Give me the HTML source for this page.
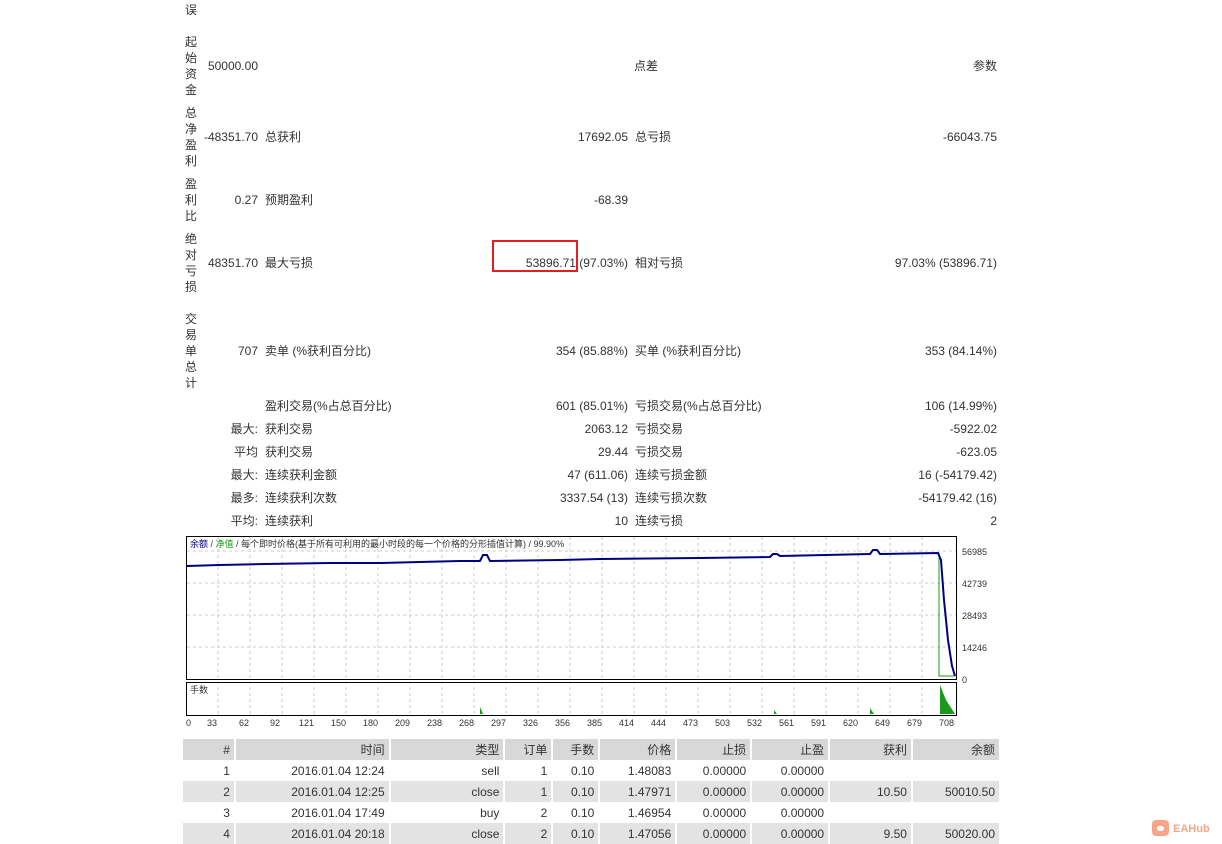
<!DOCTYPE html>
<html><head><meta charset="utf-8"><style>
body{margin:0;width:1222px;height:844px;background:#fff;position:relative;overflow:hidden;font-family:"Liberation Sans","Noto Sans CJK SC",sans-serif;font-size:12px;color:#333}
.a{position:absolute;white-space:nowrap;line-height:16px;margin-top:1px}
.r{text-align:right}
.v{position:absolute;left:185px;width:14px;line-height:16px;font-size:12px;margin-top:1px}
table{position:absolute;left:183px;top:739px;border-collapse:collapse;width:818px;font-size:12px;color:#333}
td{height:21px;padding:0 4px;text-align:right;border-right:2px solid #fff}
tr.h td{background:#d8d8d8;height:21px}
tr.g td{background:#e3e3e3}
</style></head><body>
<div class="v" style="top:1px">误</div>
<div class="v" style="top:33px">起<br>始<br>资<br>金</div>
<div class="v" style="top:104px">总<br>净<br>盈<br>利</div>
<div class="v" style="top:175px">盈<br>利<br>比</div>
<div class="v" style="top:230px">绝<br>对<br>亏<br>损</div>
<div class="v" style="top:310px">交<br>易<br>单<br>总<br>计</div>

<div class="a r" style="right:964px;top:57px">50000.00</div>
<div class="a r" style="right:564px;top:57px">点差</div>
<div class="a r" style="right:225px;top:57px">参数</div>

<div class="a r" style="right:964px;top:128px">-48351.70</div>
<div class="a" style="left:265px;top:128px">总获利</div>
<div class="a r" style="right:594px;top:128px">17692.05</div>
<div class="a" style="left:635px;top:128px">总亏损</div>
<div class="a r" style="right:225px;top:128px">-66043.75</div>

<div class="a r" style="right:964px;top:191px">0.27</div>
<div class="a" style="left:265px;top:191px">预期盈利</div>
<div class="a r" style="right:594px;top:191px">-68.39</div>

<div class="a r" style="right:964px;top:254px">48351.70</div>
<div class="a" style="left:265px;top:254px">最大亏损</div>
<div class="a r" style="right:594px;top:254px">53896.71 (97.03%)</div>
<div style="position:absolute;left:492px;top:240px;width:82px;height:28px;border:2px solid #e02020"></div>
<div class="a" style="left:635px;top:254px">相对亏损</div>
<div class="a r" style="right:225px;top:254px">97.03% (53896.71)</div>

<div class="a r" style="right:964px;top:342px">707</div>
<div class="a" style="left:265px;top:342px">卖单 (%获利百分比)</div>
<div class="a r" style="right:594px;top:342px">354 (85.88%)</div>
<div class="a" style="left:635px;top:342px">买单 (%获利百分比)</div>
<div class="a r" style="right:225px;top:342px">353 (84.14%)</div>

<div class="a" style="left:265px;top:397px">盈利交易(%占总百分比)</div>
<div class="a r" style="right:594px;top:397px">601 (85.01%)</div>
<div class="a" style="left:635px;top:397px">亏损交易(%占总百分比)</div>
<div class="a r" style="right:225px;top:397px">106 (14.99%)</div>

<div class="a r" style="right:964px;top:420px">最大:</div>
<div class="a" style="left:265px;top:420px">获利交易</div>
<div class="a r" style="right:594px;top:420px">2063.12</div>
<div class="a" style="left:635px;top:420px">亏损交易</div>
<div class="a r" style="right:225px;top:420px">-5922.02</div>

<div class="a r" style="right:964px;top:443px">平均</div>
<div class="a" style="left:265px;top:443px">获利交易</div>
<div class="a r" style="right:594px;top:443px">29.44</div>
<div class="a" style="left:635px;top:443px">亏损交易</div>
<div class="a r" style="right:225px;top:443px">-623.05</div>

<div class="a r" style="right:964px;top:466px">最大:</div>
<div class="a" style="left:265px;top:466px">连续获利金额</div>
<div class="a r" style="right:594px;top:466px">47 (611.06)</div>
<div class="a" style="left:635px;top:466px">连续亏损金额</div>
<div class="a r" style="right:225px;top:466px">16 (-54179.42)</div>

<div class="a r" style="right:964px;top:489px">最多:</div>
<div class="a" style="left:265px;top:489px">连续获利次数</div>
<div class="a r" style="right:594px;top:489px">3337.54 (13)</div>
<div class="a" style="left:635px;top:489px">连续亏损次数</div>
<div class="a r" style="right:225px;top:489px">-54179.42 (16)</div>

<div class="a r" style="right:964px;top:512px">平均:</div>
<div class="a" style="left:265px;top:512px">连续获利</div>
<div class="a r" style="right:594px;top:512px">10</div>
<div class="a" style="left:635px;top:512px">连续亏损</div>
<div class="a r" style="right:225px;top:512px">2</div>

<svg style="position:absolute;left:0;top:0" width="1222" height="844">
<g stroke="#ccc" stroke-dasharray="3,3" stroke-width="1">
<line x1="218" y1="537" x2="218" y2="715"/><line x1="250" y1="537" x2="250" y2="715"/><line x1="282" y1="537" x2="282" y2="715"/><line x1="314" y1="537" x2="314" y2="715"/><line x1="346" y1="537" x2="346" y2="715"/><line x1="378" y1="537" x2="378" y2="715"/><line x1="410" y1="537" x2="410" y2="715"/><line x1="442" y1="537" x2="442" y2="715"/><line x1="474" y1="537" x2="474" y2="715"/><line x1="506" y1="537" x2="506" y2="715"/><line x1="538" y1="537" x2="538" y2="715"/><line x1="570" y1="537" x2="570" y2="715"/><line x1="602" y1="537" x2="602" y2="715"/><line x1="634" y1="537" x2="634" y2="715"/><line x1="666" y1="537" x2="666" y2="715"/><line x1="698" y1="537" x2="698" y2="715"/><line x1="730" y1="537" x2="730" y2="715"/><line x1="762" y1="537" x2="762" y2="715"/><line x1="794" y1="537" x2="794" y2="715"/><line x1="826" y1="537" x2="826" y2="715"/><line x1="858" y1="537" x2="858" y2="715"/><line x1="890" y1="537" x2="890" y2="715"/><line x1="922" y1="537" x2="922" y2="715"/>
<line x1="187" y1="551" x2="956" y2="551"/><line x1="187" y1="583" x2="956" y2="583"/><line x1="187" y1="615" x2="956" y2="615"/><line x1="187" y1="647" x2="956" y2="647"/>
</g>
<rect x="186.5" y="536.5" width="770" height="143" fill="none" stroke="#000"/>
<rect x="186.5" y="682.5" width="770" height="33" fill="none" stroke="#000"/>
<polyline fill="none" stroke="#1a9a1a" stroke-width="1" points="939,553 939,676 955,676"/>
<polyline fill="none" stroke="#000080" stroke-width="2" points="187,566 220,565 265,564 330,563 380,563 420,562 460,561 480,561 483,555 487,555 490,561 560,560 600,559 700,558 770,557 773,554 777,554 780,556 870,554 873,550 877,550 880,554 938,553 941,560 944,600 948,640 952,666 955,676"/>
<path d="M480 714 L480 707 L483 714Z M774 714 L774 710 L777 714Z M870 714 L870 708 L874 714Z M940 714 L940 685 L946 700 L955 714Z" fill="#1a9a1a"/>
</svg>
<div class="a" style="left:190px;top:537px;font-size:9px;line-height:12px"><span style="color:#000080">余额</span> / <span style="color:#1a9a1a">净值</span> / 每个即时价格(基于所有可利用的最小时段的每一个价格的分形插值计算) / 99.90%</div>
<div class="a" style="left:190px;top:683px;font-size:9px;line-height:12px">手数</div>
<div class="a" style="left:962px;top:543px;font-size:9px">56985</div>
<div class="a" style="left:962px;top:575px;font-size:9px">42739</div>
<div class="a" style="left:962px;top:607px;font-size:9px">28493</div>
<div class="a" style="left:962px;top:639px;font-size:9px">14246</div>
<div class="a" style="left:962px;top:671px;font-size:9px">0</div>
<div class="a" style="left:186px;top:714px;font-size:9px">0</div>
<div class="a" style="left:0;top:714px;font-size:9px;width:0">
<span style="position:absolute;left:207px">33</span><span style="position:absolute;left:239px">62</span><span style="position:absolute;left:270px">92</span><span style="position:absolute;left:299px">121</span><span style="position:absolute;left:331px">150</span><span style="position:absolute;left:363px">180</span><span style="position:absolute;left:395px">209</span><span style="position:absolute;left:427px">238</span><span style="position:absolute;left:459px">268</span><span style="position:absolute;left:491px">297</span><span style="position:absolute;left:523px">326</span><span style="position:absolute;left:555px">356</span><span style="position:absolute;left:587px">385</span><span style="position:absolute;left:619px">414</span><span style="position:absolute;left:651px">444</span><span style="position:absolute;left:683px">473</span><span style="position:absolute;left:715px">503</span><span style="position:absolute;left:747px">532</span><span style="position:absolute;left:779px">561</span><span style="position:absolute;left:811px">591</span><span style="position:absolute;left:843px">620</span><span style="position:absolute;left:875px">649</span><span style="position:absolute;left:907px">679</span><span style="position:absolute;left:939px">708</span></div>

<table>
<colgroup><col style="width:52px"><col style="width:155px"><col style="width:115px"><col style="width:48px"><col style="width:47px"><col style="width:77px"><col style="width:75px"><col style="width:78px"><col style="width:83px"><col style="width:88px"></colgroup>
<tr class="h"><td>#</td><td>时间</td><td>类型</td><td>订单</td><td>手数</td><td>价格</td><td>止损</td><td>止盈</td><td>获利</td><td>余额</td></tr>
<tr><td>1</td><td>2016.01.04 12:24</td><td>sell</td><td>1</td><td>0.10</td><td>1.48083</td><td>0.00000</td><td>0.00000</td><td></td><td></td></tr>
<tr class="g"><td>2</td><td>2016.01.04 12:25</td><td>close</td><td>1</td><td>0.10</td><td>1.47971</td><td>0.00000</td><td>0.00000</td><td>10.50</td><td>50010.50</td></tr>
<tr><td>3</td><td>2016.01.04 17:49</td><td>buy</td><td>2</td><td>0.10</td><td>1.46954</td><td>0.00000</td><td>0.00000</td><td></td><td></td></tr>
<tr class="g"><td>4</td><td>2016.01.04 20:18</td><td>close</td><td>2</td><td>0.10</td><td>1.47056</td><td>0.00000</td><td>0.00000</td><td>9.50</td><td>50020.00</td></tr>
</table>

<div style="position:absolute;left:1152px;top:820px;width:17px;height:16px;background:#f7a58a;border-radius:4px"></div>
<div style="position:absolute;left:1157px;top:826px;width:7px;height:5px;background:#fff;border-radius:3px"></div>
<div class="a" style="left:1173px;top:820px;color:#f7a58a;font-weight:bold;font-size:11px">EAHub</div>
</body></html>
